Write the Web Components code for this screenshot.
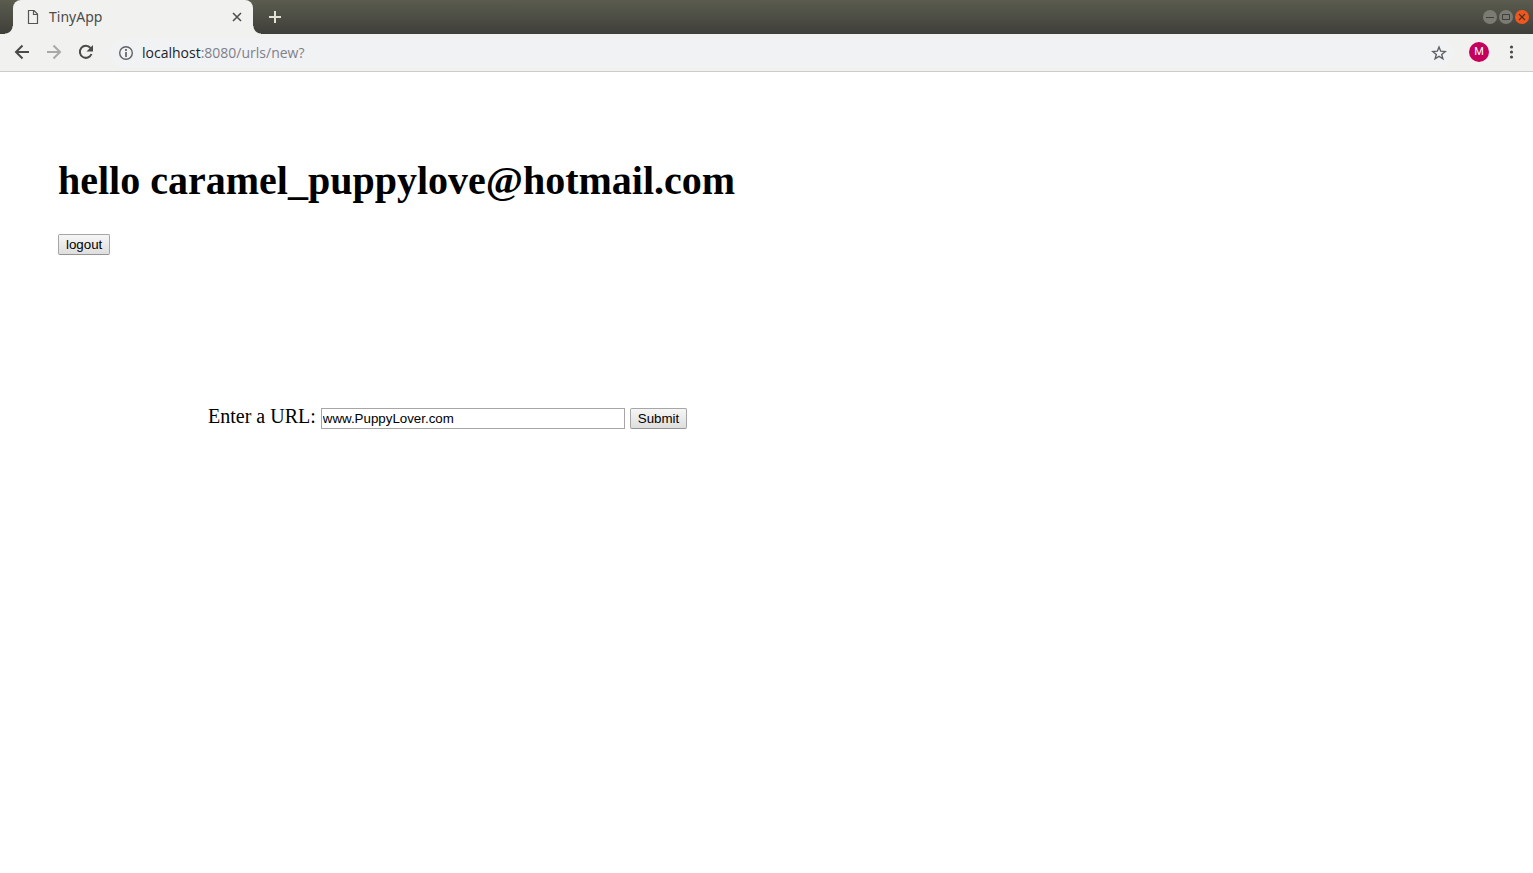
<!DOCTYPE html>
<html lang="en">
<head>
<meta charset="utf-8">
<title>TinyApp</title>
<style>
  body { margin: 0; background: #fff; font-family: "Liberation Serif", serif; color: #000; }
</style>
</head>
<body>
<browser-window>
  <tab-strip slot="tabs"><browser-tab>TinyApp</browser-tab></tab-strip>
  <tool-bar slot="toolbar"><address-bar host="localhost" path=":8080/urls/new?"></address-bar></tool-bar>
  <user-header email="caramel_puppylove@hotmail.com"></user-header>
  <url-form value="www.PuppyLover.com"></url-form>
</browser-window>

<script>
const define = (name, html, setup) => {
  const template = document.createElement('template');
  template.innerHTML = html;
  customElements.define(name, class extends HTMLElement {
    constructor() {
      super();
      this.attachShadow({ mode: 'open' }).append(template.content.cloneNode(true));
    }
    connectedCallback() {
      if (setup) setup(this, this.shadowRoot);
    }
  });
};

define('browser-window', `
  <style>
    :host { display: flex; flex-direction: column; min-height: 100vh; }
    main { flex: 1; font-size: 20px; }
  </style>
  <slot name="tabs"></slot>
  <slot name="toolbar"></slot>
  <main><slot></slot></main>`);

define('tab-strip', `
  <style>
    :host { display: flex; height: 34px; padding-left: 13px; padding-right: 4px;
      background: linear-gradient(#5b5c4f, #3f3f3a); box-sizing: border-box; }
    button { border: 0; padding: 0; background: none; display: flex; }
    .add { margin-left: 15px; align-self: center; }
    .controls { display: flex; gap: 2px; margin-left: auto; align-items: center; }
  </style>
  <slot></slot>
  <button class="add" aria-label="New tab"><svg width="14" height="14" viewBox="0 0 14 14"><path d="M7 1v12M1 7h12" stroke="#e2e1d5" stroke-width="2"/></svg></button>
  <div class="controls">
    <button aria-label="Minimize"><svg width="14" height="14" viewBox="0 0 14 14"><circle cx="7" cy="7" r="7" fill="#7c7b73"/><path d="M3 7.5h8" stroke="#3f3f39"/></svg></button>
    <button aria-label="Maximize"><svg width="14" height="14" viewBox="0 0 14 14"><circle cx="7" cy="7" r="7" fill="#7c7b73"/><path d="M3.500 4.500h7v5h-7z" fill="none" stroke="#3f3f39"/></svg></button>
    <button aria-label="Close window"><svg width="14" height="14" viewBox="0 0 14 14"><circle cx="7" cy="7" r="7" fill="#ee581e"/><path d="M4 4l6 6M10 4l-6 6" stroke="#51301c" stroke-width="1.200"/></svg></button>
  </div>`);

define('browser-tab', `
  <style>
    :host { display: flex; align-items: center; box-sizing: border-box; width: 240px; height: 34px;
      padding: 0 11px 0 14px; background: #f1f1ef; border-radius: 8px 8px 0 0; position: relative;
      color: #4c4c4c; font: 14px/20px "Noto Sans", "Open Sans", sans-serif; }
    :host::before, :host::after { content: ""; position: absolute; bottom: 0; width: 8px; height: 8px; }
    :host::before { left: -8px; background: radial-gradient(circle at 0 0, transparent 7px, #f1f1ef 8px); }
    :host::after { right: -8px; background: radial-gradient(circle at 100% 0, transparent 7px, #f1f1ef 8px); }
    span { flex: 1; margin-left: 10px; }
    button { border: 0; padding: 0; background: none; display: flex; }
  </style>
  <svg width="12" height="16" viewBox="0 0 12 16"><path d="M1.500 1.500h5.500l3.500 3.500v9.500h-9zM6.500 1.500v4h4" fill="none" stroke="#555" stroke-width="1.200"/></svg>
  <span><slot></slot></span>
  <button aria-label="Close tab"><svg width="10" height="10" viewBox="0 0 10 10"><path d="M1 1l8 8M9 1l-8 8" stroke="#4f4f4c" stroke-width="1.600"/></svg></button>`);

define('tool-bar', `
  <style>
    :host { display: flex; align-items: center; box-sizing: border-box; height: 38px;
      padding: 0 16px 1px 14px; gap: 16px; background: #f1f1ef; border-bottom: 1px solid #ccc; }
    button { border: 0; padding: 0; background: none; display: flex; }
    slot { display: flex; flex: 1; }
    .avatar { width: 20px; height: 20px; border-radius: 50%; background: #c5005c; color: #fff;
      align-items: center; justify-content: center; font: 11px/20px Roboto, sans-serif; }
  </style>
  <button aria-label="Back"><svg width="16" height="16" viewBox="0 0 16 16"><path d="M15 8H2M8.500 1.500L2 8l6.500 6.500" fill="none" stroke="#4a4a48" stroke-width="2"/></svg></button>
  <button aria-label="Forward"><svg width="16" height="16" viewBox="0 0 16 16"><path d="M1 8h13M7.500 1.500L14 8l-6.500 6.500" fill="none" stroke="#a9a9a7" stroke-width="2"/></svg></button>
  <button aria-label="Reload"><svg width="16" height="16" viewBox="0 0 16 16"><path d="M13.500 10A6 6 0 1 1 12.500 4" fill="none" stroke="#4a4a48" stroke-width="2"/><path d="M15 1v6.500H8.500z" fill="#4a4a48"/></svg></button>
  <slot></slot>
  <button class="avatar" aria-label="Profile">M</button>
  <button aria-label="Menu"><svg width="12" height="16" viewBox="0 0 12 16"><g fill="#4a4a48"><circle cx="6.500" cy="3" r="1.600"/><circle cx="6.500" cy="8" r="1.600"/><circle cx="6.500" cy="13" r="1.600"/></g></svg></button>`);

define('address-bar', `
  <style>
    :host { display: flex; flex: 1; align-items: center; box-sizing: border-box; height: 28px;
      margin-top: 2px; padding: 0 6px 0 8px; border-radius: 14px; background: #f1f2f4;
      font: 14px/20px "Open Sans", "Noto Sans", sans-serif; color: #80808a; }
    button { border: 0; padding: 0; background: none; display: flex; }
    .url { flex: 1; margin-left: 8px; }
    .host { color: #22222a; }
  </style>
  <button aria-label="Site information"><svg width="16" height="16" viewBox="0 0 16 16"><circle cx="8" cy="8" r="6.300" fill="none" stroke="#5f6165" stroke-width="1.400"/><path d="M8 7v5M8 4v2" stroke="#5f6165" stroke-width="1.700"/></svg></button>
  <span class="url"><span class="host"></span><span class="path"></span></span>
  <button aria-label="Bookmark this page"><svg width="16" height="16" viewBox="0 0 16 16"><path d="M8 2l1.700 4.200 4.500.3-3.500 2.900 1.200 4.400L8 11.400l-3.900 2.400 1.200-4.400L1.800 6.500l4.500-.3z" fill="none" stroke="#5f6165" stroke-width="1.400"/></svg></button>`,
  (element, root) => {
    root.querySelector('.host').textContent = element.getAttribute('host');
    root.querySelector('.path').textContent = element.getAttribute('path');
  });

// Form controls keep the browser's own font size.
const buttonStyle = `
  button { box-sizing: border-box; height: 21px; padding: 0 7px; margin: 0; color: #000;
    font-family: "Liberation Sans", Arial, sans-serif; border: 1px solid #a6a6a6; border-bottom-color: #949494;
    border-radius: 2px; background: linear-gradient(#f6f6f6, #dedede); }`;

define('user-header', `
  <style>
    :host { display: block; padding: 86px 58px 0; }
    h1 { margin: 0 0 30px; font-size: 40px; line-height: 46px; }
    form { display: flex; }
    ${buttonStyle}
  </style>
  <h1></h1>
  <form><button type="button">logout</button></form>`,
  (element, root) => {
    root.querySelector('h1').textContent = 'hello ' + element.getAttribute('email');
  });

define('url-form', `
  <style>
    :host { display: block; padding: 150px 58px 0 208px; }
    form { display: flex; align-items: baseline; gap: 5px; line-height: 23px; }
    input { box-sizing: border-box; width: 304px; height: 21px; margin: 0; padding: 1px;
      border: 1px solid #a6a6a6; background: #fff; color: #000;
      font-family: "Liberation Sans", Arial, sans-serif; }
    ${buttonStyle}
  </style>
  <form>
    <label for="url">Enter a URL:</label>
    <input id="url" type="text" name="longURL">
    <button type="button">Submit</button>
  </form>`,
  (element, root) => {
    root.querySelector('input').value = element.getAttribute('value');
  });
</script>
</body>
</html>
